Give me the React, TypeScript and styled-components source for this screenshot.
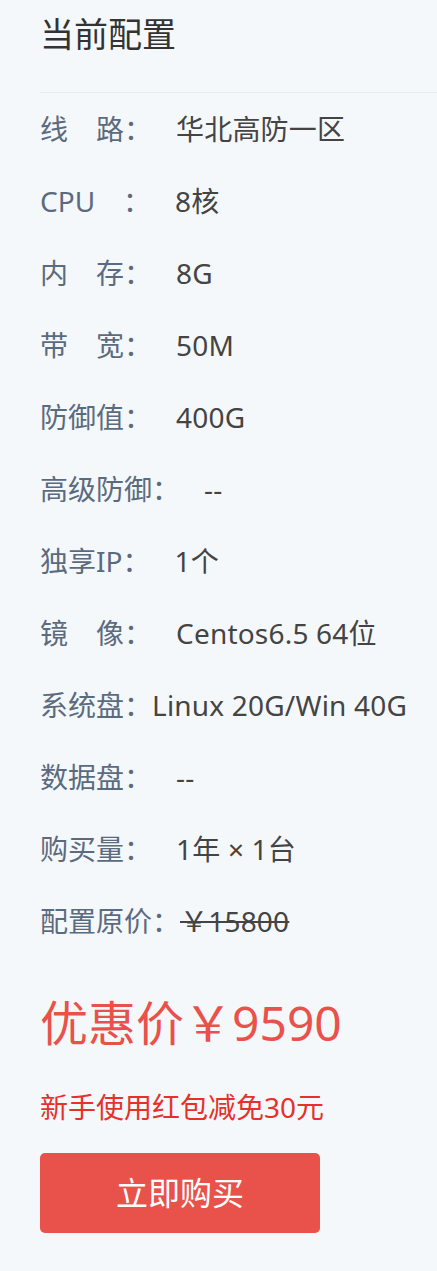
import * as React from 'react';
import styled, { createGlobalStyle } from 'styled-components';

// ______________________________________________________
//
// @ Data

type Spec = { label: string; value: string; tight?: boolean; struck?: boolean };

const specs: Spec[] = [
  { label: '线　路：', value: '华北高防一区' },
  { label: 'CPU　：', value: '8核' },
  { label: '内　存：', value: '8G' },
  { label: '带　宽：', value: '50M' },
  { label: '防御值：', value: '400G' },
  { label: '高级防御：', value: '--' },
  { label: '独享IP：', value: '1个' },
  { label: '镜　像：', value: 'Centos6.5 64位' },
  { label: '系统盘：', value: 'Linux 20G/Win 40G', tight: true },
  { label: '数据盘：', value: '--' },
  { label: '购买量：', value: '1年 × 1台' },
  { label: '配置原价：', value: '￥15800', tight: true, struck: true },
];

// ______________________________________________________
//
// @ Styles

const GlobalStyle = createGlobalStyle`
  body {
    margin: 0;
    background: #f5f8fa;
    font-family: "Noto Sans", "Noto Sans CJK SC", sans-serif;
  }
`;

const Panel = styled.div`
  padding: 0 0 38px 40px;
  overflow: hidden;
`;

const Header = styled.div`
  padding-bottom: 24px;
  border-bottom: 1px solid #e9edf0;
`;

const Title = styled.h2`
  margin: 0;
  font-size: 34px;
  font-weight: 400;
  line-height: 68px;
  color: #333;
`;

const List = styled.ul`
  margin: 0;
  padding: 0;
  list-style: none;
`;

const Row = styled.li`
  display: flex;
  align-items: baseline;
  height: 72px;
  font-size: 28px;
  line-height: 72px;
  white-space: nowrap;
`;

const Label = styled.span`
  color: #5b6b7f;
`;

const Value = styled.span<{ $tight?: boolean; $struck?: boolean }>`
  margin-left: ${(p) => (p.$tight ? '0' : '24px')};
  color: #444;
  letter-spacing: 0.2px;
  text-decoration: ${(p) => (p.$struck ? 'line-through' : 'none')};
`;

const Price = styled.div`
  margin-top: 30px;
  font-size: 48px;
  line-height: 72px;
  color: #e9514a;
`;

const Note = styled.div`
  margin-top: 24px;
  font-size: 28px;
  line-height: 48px;
  color: #e8302a;
`;

const BuyButton = styled.button`
  display: block;
  margin-top: 22px;
  width: 280px;
  height: 80px;
  padding: 0;
  border: none;
  border-radius: 5px;
  background: #e9524a;
  color: #fff;
  font-family: inherit;
  font-size: 32px;
  line-height: 80px;
  cursor: pointer;
`;

// ______________________________________________________
//
// @ View

const App: React.FC = () => (
  <>
    <GlobalStyle />
    <Panel>
      <Header>
        <Title>当前配置</Title>
      </Header>
      <List>
        {specs.map((s) => (
          <Row key={s.label}>
            <Label>{s.label}</Label>
            <Value $tight={s.tight} $struck={s.struck}>
              {s.value}
            </Value>
          </Row>
        ))}
      </List>
      <Price>优惠价￥9590</Price>
      <Note>新手使用红包减免30元</Note>
      <BuyButton>立即购买</BuyButton>
    </Panel>
  </>
);

export default App;
